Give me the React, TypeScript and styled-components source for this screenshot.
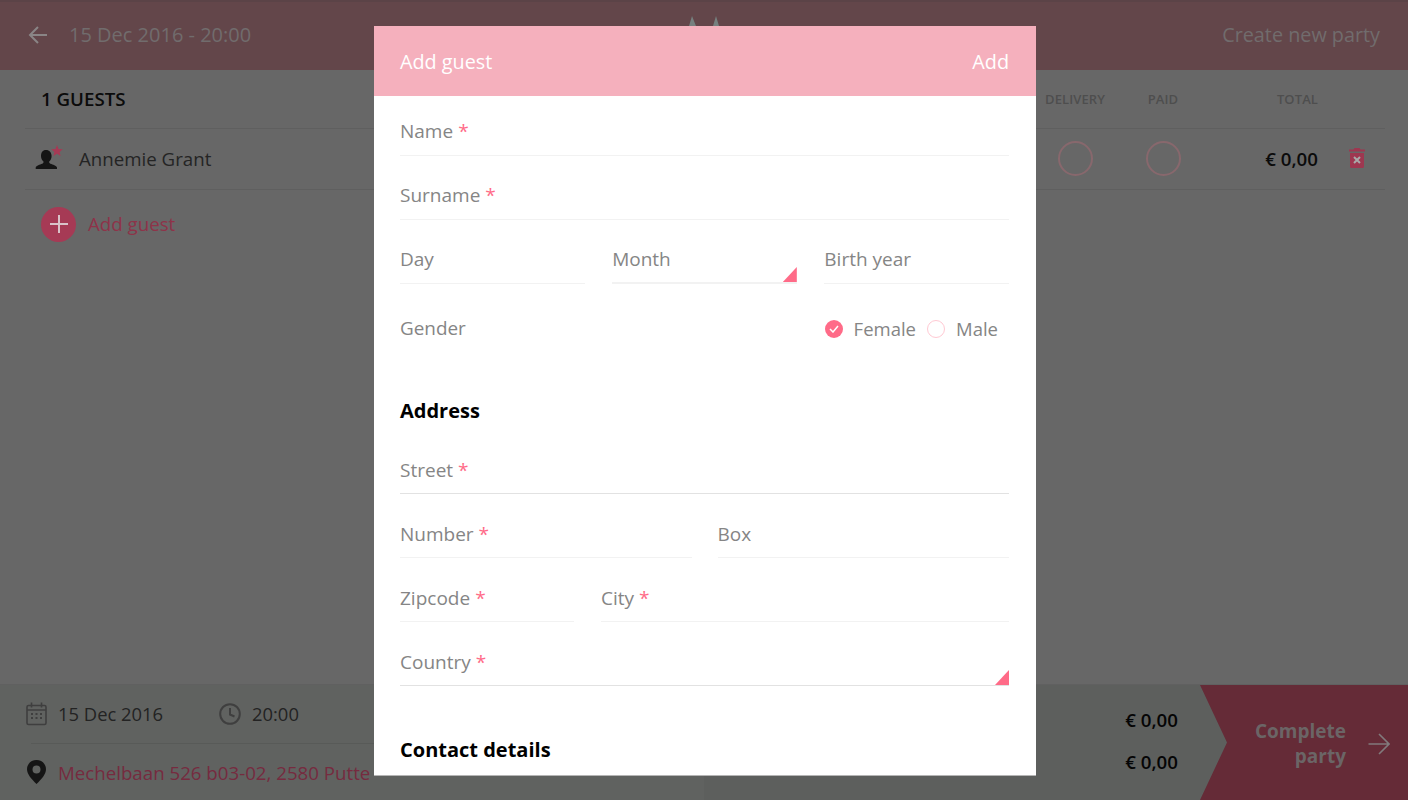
import React from "react";
import styled, { createGlobalStyle } from "styled-components";

const Global = createGlobalStyle`
  html, body { margin: 0; height: 100%; }
  body { font-family: "Open Sans", "Liberation Sans", sans-serif; background: #676767; overflow: hidden; }
  * { box-sizing: border-box; }
`;

const Page = styled.div`
  position: relative;
  width: 1408px;
  height: 800px;
  display: flex;
  flex-direction: column;
  overflow: hidden;
  background: #676767;
`;

const TopBar = styled.header`
  height: 70px;
  flex: none;
  display: flex;
  align-items: center;
  justify-content: space-between;
  padding: 0 28px 4px 28px;
  background: #63464a;
  border-top: 2px solid #5b4347;
  color: #716c6d;
  font-size: 19.8px;
  position: relative;
`;

const BackGroup = styled.div`
  display: flex;
  align-items: center;
  gap: 21px;
  font-size: 20px;
`;

const BackIcon = styled.svg`
  margin-top: 2px;
`;

const LogoMark = styled.svg`
  position: absolute;
  left: 688px;
  top: 12px;
`;

const Main = styled.main`
  flex: 1;
  display: flex;
  flex-direction: column;
  padding: 0 23px 0 25px;
`;

const TableRow = styled.div<{ $h: number }>`
  display: grid;
  grid-template-columns: 1fr 88px 88px 111px 67px;
  align-items: center;
  height: ${(p) => p.$h}px;
  padding-bottom: 2px;
  border-bottom: 1px solid #5f5f5f;
`;

const GuestCount = styled.div`
  padding-left: 16px;
  font-size: 18.7px;
  font-weight: 600;
  color: #0b0b0b;
`;

const ColHead = styled.div<{ $right?: boolean }>`
  text-align: ${(p) => (p.$right ? "right" : "center")};
  margin-top: 2px;
  font-size: 13px;
  font-weight: 600;
  color: #4e4e4e;
  letter-spacing: 0.1px;
`;

const NameCell = styled.div`
  display: flex;
  align-items: center;
  gap: 16px;
  padding-left: 10px;
  font-size: 18.7px;
  color: #242424;
`;

const Ring = styled.div`
  width: 35px;
  height: 35px;
  border-radius: 50%;
  border: 2px solid #88686d;
  justify-self: center;
`;

const Amount = styled.div`
  text-align: right;
  font-size: 18.7px;
  font-weight: 600;
  color: #0b0b0b;
`;

const TrashCell = styled.div`
  padding-left: 31px;
  display: flex;
`;

const AddRow = styled.div`
  display: flex;
  align-items: center;
  gap: 12px;
  height: 68px;
  padding-left: 16px;
  font-size: 18.7px;
  color: #8e3349;
`;

const AddLabel = styled.span`
  padding-bottom: 2px;
`;

const AddCircle = styled.div`
  width: 35px;
  height: 35px;
  border-radius: 50%;
  background: #a63a55;
  display: flex;
  align-items: center;
  justify-content: center;
`;

const Footer = styled.footer`
  height: 116px;
  flex: none;
  display: grid;
  grid-template-columns: 704px 1fr;
  border-top: 1px solid #606060;
`;

const FootLeft = styled.div`
  background: #606260;
  display: flex;
  flex-direction: column;
`;

const DateRow = styled.div`
  height: 58px;
  display: flex;
  align-items: center;
  padding-left: 26px;
  font-size: 18.4px;
  color: #232323;
`;

const DateItem = styled.div<{ $w?: number }>`
  display: flex;
  align-items: center;
  gap: 11px;
  width: ${(p) => (p.$w ? `${p.$w}px` : "auto")};
`;

const DateText = styled.span`
  padding-bottom: 2px;
`;

const AddressRow = styled.div`
  margin-left: 31px;
  border-top: 1px solid #585a58;
  height: 57px;
  display: flex;
  align-items: center;
  gap: 11px;
  font-size: 18.7px;
  color: #762b3f;
  & > svg { margin-left: -5px; }
`;

const FootRight = styled.div`
  background: #5d5f5d;
  display: flex;
`;

const Totals = styled.div`
  flex: 1;
  display: flex;
  flex-direction: column;
  align-items: flex-end;
  padding: 22px 22px 0 0;
  gap: 17px;
  font-size: 18.7px;
  font-weight: 600;
  line-height: 25px;
  color: #050505;
`;

const CompleteButton = styled.div`
  width: 208px;
  background: #652b37;
  clip-path: polygon(0 0, 100% 0, 100% 100%, 0 100%, 27px 50%);
  display: flex;
  align-items: center;
  justify-content: flex-end;
  gap: 22px;
  padding: 2px 18px 0 0;
  color: #6b6566;
  font-size: 19px;
  font-weight: 700;
  line-height: 25px;
  text-align: right;
`;

const Modal = styled.section`
  position: absolute;
  left: 374px;
  top: 26px;
  width: 662px;
  height: 750px;
  background: #fff;
  display: flex;
  flex-direction: column;
  overflow: hidden;
  border-bottom: 1px solid #b5b5b5;
`;

const ModalHead = styled.div`
  height: 70px;
  flex: none;
  display: flex;
  align-items: center;
  justify-content: space-between;
  padding: 0 27px 0 26px;
  background: #f5b0bd;
  color: #fff;
  font-size: 19.8px;
`;

const Form = styled.div`
  padding: 0 27px 0 26px;
  display: flex;
  flex-direction: column;
  gap: 4px;
`;

const Cols = styled.div<{ $cols: string; $gap: number }>`
  display: grid;
  grid-template-columns: ${(p) => p.$cols};
  column-gap: ${(p) => p.$gap}px;
`;

const Field = styled.div<{ $strong?: boolean; $select?: boolean; $low?: boolean }>`
  position: relative;
  height: 60px;
  display: flex;
  align-items: flex-end;
  padding-bottom: ${(p) => (p.$select || p.$low ? 10 : 11)}px;
  font-size: 19px;
  line-height: 26px;
  color: #858585;
  border-bottom: ${(p) => (p.$select ? "2px" : "1px")} solid ${(p) => (p.$strong ? "#e2e2e2" : "#f2f2f2")};
`;

const Req = styled.span`
  color: #ff6b88;
  margin-left: 5px;
`;

const SelectMark = styled.span`
  position: absolute;
  right: 0;
  bottom: 0;
  width: 14px;
  height: 15px;
  background: #ff6b88;
  clip-path: polygon(100% 0, 100% 100%, 0 100%);
`;

const GenderRow = styled.div`
  height: 110px;
  margin-top: -4px;
  display: flex;
  justify-content: space-between;
  align-items: flex-start;
  padding: 31px 11px 0 0;
  font-size: 18.9px;
  line-height: 26px;
  color: #858585;
`;

const RadioGroup = styled.div`
  display: flex;
  align-items: center;
  gap: 11px;
  padding-top: 1px;
  font-size: 18.5px;
`;

const RadioOff = styled.span`
  width: 18px;
  height: 18px;
  border-radius: 50%;
  border: 1px solid #ffc9d3;
`;

const RadioOn = styled.span`
  width: 18px;
  height: 18px;
  border-radius: 50%;
  background: #ff6b88;
  display: flex;
  align-items: center;
  justify-content: center;
`;

const SectionTitle = styled.h3<{ $top: number; $bottom?: number }>`
  margin: ${(p) => p.$top}px 0 ${(p) => p.$bottom ?? 0}px;
  font-size: 20px;
  font-weight: 700;
  line-height: 26px;
  color: #000;
`;

const Person = () => (
  <svg width="28" height="26" viewBox="0 0 28 26">
    <path d="M11 5c3.400 0 5.600 2.600 5.600 6 0 2.400-1 4.400-2.400 5.600-.2 1 .2 1.700 1.200 2.100 2.500 1 6 1.600 6.600 3.900v1.400H.7v-1.400c.6-2.300 4.100-2.900 6.600-3.900 1-.4 1.400-1.100 1.200-2.100C7.100 15.400 6 13.400 6 11c0-3.400 1.600-6 5-6z" fill="#151515" />
    <path d="M22 0l1.600 3.900 4.200.3-3.200 2.700 1 4.100-3.600-2.200-3.600 2.200 1-4.100-3.200-2.700 4.200-.3z" fill="#a63a55" />
  </svg>
);

export default function App() {
  return (
    <Page>
      <Global />
      <TopBar>
        <BackGroup>
          <BackIcon width="20" height="20" viewBox="0 0 20 20" fill="none" stroke="#8a8586" strokeWidth="2">
            <path d="M19 10H2M10 2l-8 8 8 8" />
          </BackIcon>
          <span>15 Dec 2016 - 20:00</span>
        </BackGroup>
        <LogoMark width="32" height="14" viewBox="0 0 32 14">
          <path d="M1 12L4 2l4 10zM25 12l3-10 3 10z" fill="#76807f" />
        </LogoMark>
        <span>Create new party</span>
      </TopBar>

      <Main>
        <TableRow $h={59}>
          <GuestCount>1 GUESTS</GuestCount>
          <ColHead>DELIVERY</ColHead>
          <ColHead>PAID</ColHead>
          <ColHead $right>TOTAL</ColHead>
          <span />
        </TableRow>
        <TableRow $h={61}>
          <NameCell>
            <Person />
            <span>Annemie Grant</span>
          </NameCell>
          <Ring />
          <Ring />
          <Amount>€ 0,00</Amount>
          <TrashCell>
            <svg width="16" height="20" viewBox="0 0 16 20">
              <path d="M5.500 0h5l1 1.500H16v2H0v-2h4.500zM1 5h14v13.500a1.500 1.500 0 0 1-1.500 1.500h-11A1.500 1.500 0 0 1 1 18.500z" fill="#9e3750" />
              <path d="M5 9l6 6M11 9l-6 6" stroke="#a9a9a9" strokeWidth="2" />
            </svg>
          </TrashCell>
        </TableRow>
        <AddRow>
          <AddCircle>
            <svg width="20" height="20" viewBox="0 0 20 20" stroke="#d9c3c9" strokeWidth="2">
              <path d="M10 1v18M1 10h18" />
            </svg>
          </AddCircle>
          <AddLabel>Add guest</AddLabel>
        </AddRow>
      </Main>

      <Footer>
        <FootLeft>
          <DateRow>
            <DateItem $w={193}>
              <svg width="21" height="24" viewBox="0 0 21 24" fill="none" stroke="#3f3f3f" strokeWidth="1.600">
                <rect x="1" y="3.500" width="19" height="19" rx="1.500" />
                <path d="M5.500 0.500v5M15.500 0.500v5M1 8h19" />
                <path d="M5 12h2M9.500 12h2M14 12h2M5 16h2M9.500 16h2M14 16h2" strokeWidth="1.800" />
              </svg>
              <DateText>15 Dec 2016</DateText>
            </DateItem>
            <DateItem>
              <svg width="22" height="22" viewBox="0 0 22 22" fill="none" stroke="#3f3f3f" strokeWidth="2">
                <circle cx="11" cy="11" r="9.800" />
                <path d="M11 5v6.500l4.500 2" />
              </svg>
              <DateText>20:00</DateText>
            </DateItem>
          </DateRow>
          <AddressRow>
            <svg width="21" height="24" viewBox="0 0 21 24">
              <path fillRule="evenodd" d="M10.500 0C16 0 20 4 20 9.300c0 5-4.500 10-9.500 14.700C5.500 19.300 1 14.300 1 9.300 1 4 5 0 10.500 0zm0 5.500a4 4 0 1 0 0 8 4 4 0 0 0 0-8z" fill="#151515" />
            </svg>
            <span>Mechelbaan 526 b03-02, 2580 Putte</span>
          </AddressRow>
        </FootLeft>
        <FootRight>
          <Totals>
            <span>€ 0,00</span>
            <span>€ 0,00</span>
          </Totals>
          <CompleteButton>
            <span>
              Complete
              <br />
              party
            </span>
            <svg width="22" height="22" viewBox="0 0 22 22" fill="none" stroke="#817a7c" strokeWidth="1.600">
              <path d="M0.500 11h20M11 1l10 10-10 10" />
            </svg>
          </CompleteButton>
        </FootRight>
      </Footer>

      <Modal>
        <ModalHead>
          <span>Add guest</span>
          <span>Add</span>
        </ModalHead>
        <Form>
          <Field>
            <span>Name<Req>*</Req></span>
          </Field>
          <Field>
            <span>Surname<Req>*</Req></span>
          </Field>
          <Cols $cols="1fr 1fr 1fr" $gap={27.5}>
            <Field>Day</Field>
            <Field $select>
              Month
              <SelectMark />
            </Field>
            <Field>Birth year</Field>
          </Cols>
          <GenderRow>
            <span>Gender</span>
            <RadioGroup>
              <RadioOn>
                <svg width="10" height="8" viewBox="0 0 10 8" fill="none" stroke="#fff" strokeWidth="1.500">
                  <path d="M1 4l3 3 5-6" />
                </svg>
              </RadioOn>
              <span>Female</span>
              <RadioOff />
              <span>Male</span>
            </RadioGroup>
          </GenderRow>
          <SectionTitle $top={0} $bottom={6}>Address</SectionTitle>
          <Field $strong $low>
            <span>Street<Req>*</Req></span>
          </Field>
          <Cols $cols="1fr 1fr" $gap={26}>
            <Field $low>
              <span>Number<Req>*</Req></span>
            </Field>
            <Field $low>Box</Field>
          </Cols>
          <Cols $cols="174px 1fr" $gap={27}>
            <Field $low>
              <span>Zipcode<Req>*</Req></span>
            </Field>
            <Field $low>
              <span>City<Req>*</Req></span>
            </Field>
          </Cols>
          <Field $strong $low>
            <span>Country<Req>*</Req></span>
            <SelectMark />
          </Field>
          <SectionTitle $top={47}>Contact details</SectionTitle>
        </Form>
      </Modal>
    </Page>
  );
}
